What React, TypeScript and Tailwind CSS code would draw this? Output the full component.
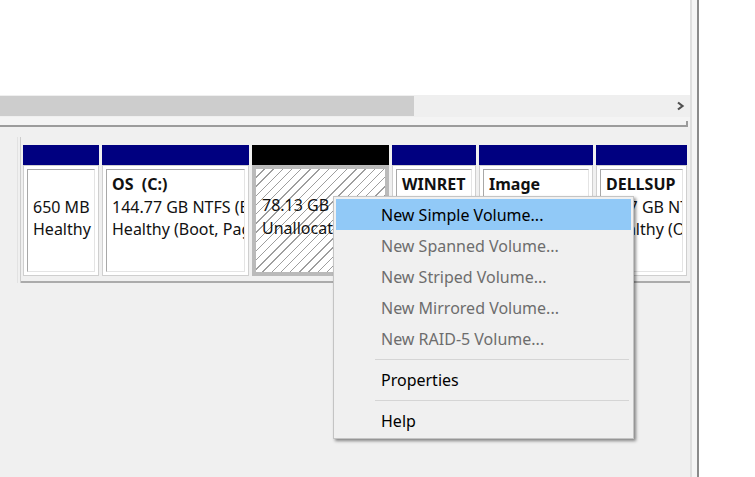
import React from "react";

type PartProps = {
  width: string;
  name?: string;
  size: string;
  status: string;
};

// normal (allocated) partition tile: navy bar + white sunken box
const Part = ({ width, name, size, status }: PartProps) => (
  <div className={`flex flex-col ${width}`}>
    <div className="h-[20px] bg-[#000080]" />
    <div className="h-[111px] border border-[#cfcfcf] bg-white p-[3px]">
      <div className="h-full overflow-hidden whitespace-nowrap border-b border-l border-r border-t border-b-[#e4e4e4] border-l-[#a8a8a8] border-r-[#e4e4e4] border-t-[#a8a8a8] pl-[5px] pt-[3px] leading-[22.5px]">
        <div className="h-[22.5px] whitespace-pre font-bold">{name ?? ""}</div>
        <div>{size}</div>
        <div>{status}</div>
      </div>
    </div>
  </div>
);

const MenuItem = ({
  label,
  disabled,
  active,
}: {
  label: string;
  disabled?: boolean;
  active?: boolean;
}) => (
  <div
    className={`flex h-[31px] items-center pl-[45px] ${
      active ? "bg-[#91c9f7] text-black" : disabled ? "text-[#6d6d6d]" : "text-black"
    }`}
  >
    {label}
  </div>
);

const Separator = () => (
  <div className="flex h-[10px] items-center pl-[39px] pr-[2px]">
    <div className="h-px flex-1 bg-[#d5d5d5]" />
  </div>
);

export default function App() {
  return (
    <div className="relative flex h-[477px] w-[755px] overflow-hidden bg-white font-['Noto_Sans',sans-serif] text-[16px] text-[#111]">
      {/* main pane */}
      <div className="flex w-[690px] flex-col bg-[#f0f0f0]">
        {/* volume list (empty part visible) */}
        <div className="h-[95px] bg-white" />

        {/* horizontal scrollbar */}
        <div className="flex h-[22px] items-stretch bg-[#efefef] py-[1px]">
          <div className="w-[414px] bg-[#cdcdcd]" />
          <div className="flex flex-1 items-center justify-end pr-[5px]">
            <svg width="9" height="10" viewBox="0 0 9 10">
              <polyline
                points="2,1.5 6.5,5 2,8.5"
                fill="none"
                stroke="#505050"
                strokeWidth="2.2"
              />
            </svg>
          </div>
        </div>

        {/* splitter */}
        <div className="flex h-[10px] bg-[#f4f4f4] pr-[2px]">
          <div className="mt-[4px] flex-1 border-b-2 border-r-2 border-[#9c9c9c]" />
        </div>

        {/* disk row */}
        <div className="flex h-[158px]">
          <div className="mt-[10px] h-[146px] w-[18px] border-r border-[#e2e2e2] bg-[#f0f0f0]" />
          <div className="ml-[2px] mt-[10px] h-[146px] w-px bg-[#cdcdcd]" />
          <div className="flex flex-1 flex-col">
            <div className="flex gap-[3px] border-b-2 border-[#ababab] pb-[5px] pl-[2px] pt-[18px]">
              <Part width="w-[76px]" size="650 MB" status="Healthy" />
              <Part
                width="w-[147px]"
                name="OS  (C:)"
                size="144.77 GB NTFS (BitLocker Encrypted)"
                status="Healthy (Boot, Page File, Crash Dump, Primary Partition)"
              />

              {/* unallocated */}
              <div className="flex w-[137px] flex-col">
                <div className="h-[20px] bg-black" />
                <div className="h-[111px] border-[4px] border-[#bababa] bg-[repeating-linear-gradient(135deg,#ffffff_0px,#ffffff_5.5px,#9e9e9e_5.5px,#9e9e9e_6.5px)]">
                  <div className="overflow-hidden whitespace-nowrap pl-[6px] pt-[25px] leading-[22.5px]">
                    <div>78.13 GB</div>
                    <div>Unallocated</div>
                  </div>
                </div>
              </div>

              <Part
                width="w-[84px]"
                name="WINRET"
                size="1.00 GB NTFS"
                status="Healthy (OEM Partition)"
              />
              <Part
                width="w-[114px]"
                name="Image"
                size="13.30 GB NTFS"
                status="Healthy (OEM Partition)"
              />
              <Part
                width="w-[91px]"
                name="DELLSUP"
                size="1.27 GB NTFS"
                status="Healthy (OEM Partition)"
              />
            </div>
          </div>
        </div>

        <div className="flex-1" />
      </div>

      {/* right edge of the console pane */}
      <div className="w-[2px] bg-[#dedede]" />
      <div className="w-[5px] bg-[#f4f4f4]" />
      <div className="w-[2px] bg-[#8a8a8a]" />
      <div className="flex-1 bg-white" />

      {/* context menu */}
      <div className="absolute left-[333px] top-[196px] w-[301px] border border-[#c4c4c4] bg-[#f0f0f0] p-[2px] shadow-[2px_2px_3px_rgba(0,0,0,0.45)]">
        <MenuItem label="New Simple Volume..." active />
        <MenuItem label="New Spanned Volume..." disabled />
        <MenuItem label="New Striped Volume..." disabled />
        <MenuItem label="New Mirrored Volume..." disabled />
        <MenuItem label="New RAID-5 Volume..." disabled />
        <Separator />
        <MenuItem label="Properties" />
        <Separator />
        <MenuItem label="Help" />
      </div>
    </div>
  );
}
